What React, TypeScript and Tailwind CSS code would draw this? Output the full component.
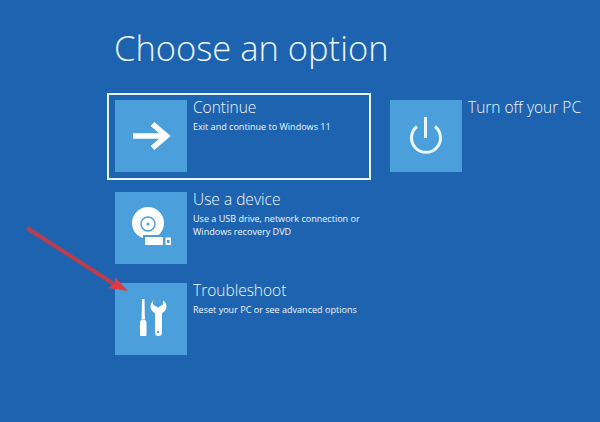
import type { ReactNode } from "react";

interface OptionProps {
  icon: ReactNode;
  title: string;
  lines?: string[];
  selected?: boolean;
  width: string;
}

function Option({ icon, title, lines, selected, width }: OptionProps) {
  return (
    <div
      className={`flex h-[87px] gap-[6px] border-2 py-[5px] pl-[6px] ${width} ${
        selected ? "border-[#e6f6fb]" : "border-transparent"
      }`}
    >
      <div className="h-[72px] w-[72px] shrink-0 bg-[#4b9fdb]">{icon}</div>
      <div className="whitespace-nowrap text-[#eef7fc]">
        <div className="-mt-[4px] text-[15.5px] leading-[22px] font-light">{title}</div>
        {lines && (
          <div className="mt-[2px] text-[9.05px] leading-[13px]">
            {lines.map((line) => (
              <div key={line}>{line}</div>
            ))}
          </div>
        )}
      </div>
    </div>
  );
}

// icons are drawn in tile coordinates, so each one fills the 72px tile
function ArrowIcon() {
  return (
    <svg width="72" height="72" viewBox="0 0 72 72" fill="none" stroke="#fff" strokeWidth="5.500">
      <path d="M18 36h31" />
      <path d="M37.500 24l14 12-14 12" />
    </svg>
  );
}

function PowerIcon() {
  return (
    <svg width="72" height="72" viewBox="0 0 72 72" fill="none" stroke="#e9f6fc" strokeWidth="3">
      <path d="M35.500 17v21" />
      <path d="M27 26.500a14.500 14.500 0 1 0 18 0" />
    </svg>
  );
}

function DeviceIcon() {
  return (
    <svg width="72" height="72" viewBox="0 0 72 72">
      <circle cx="33" cy="31" r="16" fill="#fff" />
      <circle cx="33" cy="32" r="7" fill="none" stroke="#4b9fdb" strokeWidth="1.500" />
      <circle cx="33" cy="32" r="1.500" fill="#4b9fdb" />
      <rect x="28" y="43" width="23" height="12" fill="#4b9fdb" />
      <rect x="30" y="45" width="18" height="8" rx="1" fill="#fff" />
      <rect x="50.500" y="45.500" width="5.500" height="7.500" fill="#fff" />
      <rect x="52" y="48" width="2.500" height="3" fill="#4b9fdb" />
    </svg>
  );
}

function ToolsIcon() {
  return (
    <svg width="72" height="72" viewBox="0 0 72 72" fill="#fff">
      <path d="M27 16h2.500l.4 20h-3.300z" />
      <path d="M25 40c0-2 1-2.500 1.300-3.500h3.900c.3 1 1.300 1.500 1.300 3.500v12a1 1 0 0 1-1 1h-4.500a1 1 0 0 1-1-1z" />
      <path d="M38 17.500v4l5 3 5-3v-4c2 1 3.500 3.500 3.500 6 0 3-2 5.500-4.500 6.500v19.500a3.500 3.500 0 0 1-7 0V30c-2.500-1-4.500-3.500-4.500-6.500 0-2.500 1.500-5 3.500-6z" />
      <circle cx="43" cy="49" r="1.200" fill="#4b9fdb" />
    </svg>
  );
}

export default function App() {
  return (
    <div className="relative h-[422px] w-[600px] overflow-hidden bg-[#1e63b0] font-['Open_Sans',sans-serif]">
      <div className="pl-[107px]">
        <h1 className="pt-[25px] pl-[7px] text-[34.5px] leading-[46px] font-light whitespace-nowrap text-[#eaf6fc]">
          Choose an option
        </h1>
        <div className="mt-[22px] flex gap-[11px]">
          <div className="flex flex-col gap-[4.500px]">
            <Option
              selected
              width="w-[264px]"
              icon={<ArrowIcon />}
              title="Continue"
              lines={["Exit and continue to Windows 11"]}
            />
            <Option
              width="w-[264px]"
              icon={<DeviceIcon />}
              title="Use a device"
              lines={["Use a USB drive, network connection or", "Windows recovery DVD"]}
            />
            <Option
              width="w-[264px]"
              icon={<ToolsIcon />}
              title="Troubleshoot"
              lines={["Reset your PC or see advanced options"]}
            />
          </div>
          <Option width="w-[210px]" icon={<PowerIcon />} title="Turn off your PC" />
        </div>
      </div>
      {/* annotation arrow */}
      <svg className="absolute top-0 left-0" width="600" height="422" viewBox="0 0 600 422">
        <path d="M27 228L114 284" stroke="#bb3d4e" strokeWidth="4" />
        <path d="M128 291L108 288L115 283L115 277z" fill="#e23a42" />
      </svg>
    </div>
  );
}
